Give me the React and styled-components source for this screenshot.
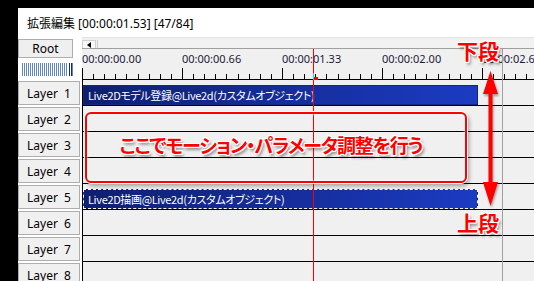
import React from 'react'
import styled, { createGlobalStyle } from 'styled-components'

const GlobalStyle = createGlobalStyle`
  html, body {
    margin: 0;
    padding: 0;
    background: #000;
  }
  body {
    font-family: "Noto Sans", "Noto Sans CJK JP", sans-serif;
  }
`;

// 全体（黒い余白の上にウィンドウ）
const Screen = styled.div`
  width: 534px;
  height: 281px;
  box-sizing: border-box;
  padding: 8px 0 0 18px;
  overflow: hidden;
  background: #000;
`;

const Window = styled.div`
  height: 100%;
  display: flex;
  flex-direction: column;
  background: #fff;
`;

const TitleBar = styled.div`
  height: 29px;
  flex-shrink: 0;
  display: flex;
  align-items: center;
  padding-left: 9px;
  font-size: 12px;
  color: #000;
`;

const Body = styled.div`
  flex: 1;
  display: flex;
  min-height: 0;
`;

// 左側のレイヤー列
const Side = styled.div`
  width: 64px;
  flex-shrink: 0;
  display: flex;
  flex-direction: column;
  background: #fff;
`;

const RootButton = styled.div`
  width: 55px;
  height: 19px;
  flex-shrink: 0;
  margin-top: 2px;
  box-sizing: border-box;
  border: 1px solid #adadad;
  background: #efefef;
  display: flex;
  align-items: center;
  justify-content: center;
  font-size: 12px;
  color: #000;
`;

const Meter = styled.div`
  width: 51px;
  height: 13px;
  flex-shrink: 0;
  margin: 5px 0 4px 4px;
  background:
    linear-gradient(90deg, transparent 0 46px, #ffffff 46px 47px, #1c2a6a 47px 48px, #fff 48px 49px, #1c2a6a 49px 50px, transparent 50px),
    repeating-linear-gradient(90deg, #5d86d8 0 1px, #ffffff 1px 2px);
`;

const LayerButton = styled.div`
  width: 62px;
  height: 24px;
  margin: 1px 0;
  box-sizing: border-box;
  border: 1px solid #adadad;
  background: #f0f0f0;
  display: flex;
  align-items: center;
  justify-content: center;
  font-size: 12px;
  color: #000;
  white-space: pre;
  flex-shrink: 0;
`;

// タイムライン部分
const Timeline = styled.div`
  flex: 1;
  position: relative;
  display: flex;
  flex-direction: column;
  background: #f0f0f0;
  overflow: hidden;
`;

const ScrollBar = styled.div`
  height: 12px;
  flex-shrink: 0;
  display: flex;
  box-sizing: border-box;
  padding-top: 2px;
  border-top: 1px solid #e3e3e3;
  border-bottom: 1px solid #a0a0a0;
  background: #f0f0f0;
`;

const ScrollArrow = styled.div`
  width: 14px;
  box-sizing: border-box;
  border: 1px solid #cfcfcf;
  border-bottom: none;
  background: #f8f8f8;
  display: flex;
  align-items: center;
  justify-content: center;
  &::before {
    content: '';
    border-style: solid;
    border-width: 3px 4px 3px 0;
    border-color: transparent #000 transparent transparent;
  }
`;

const ScrollThumb = styled.div`
  flex: 1;
  margin-left: 1px;
  box-sizing: border-box;
  border-left: 1px solid #cfcfcf;
  background: #f2f2f2;
`;

const Ruler = styled.div`
  height: 31px;
  flex-shrink: 0;
  display: flex;
  flex-direction: column;
  justify-content: space-between;
`;

const RulerLabels = styled.div`
  display: flex;
  padding-top: 3px;
`;

const RulerLabel = styled.div`
  width: 100px;
  flex-shrink: 0;
  font-size: 11px;
  line-height: 14px;
  color: #1a1a3a;
  white-space: nowrap;
`;

const Rows = styled.div`
  border-left: 1px solid #000;
`;

const Row = styled.div`
  height: 26px;
  flex-shrink: 0;
  box-sizing: border-box;
  border-bottom: 1px solid #000;
  display: flex;
  align-items: flex-end;
`;

const Clip = styled.div`
  position: relative;
  width: 395px;
  height: 20px;
  box-sizing: border-box;
  padding-left: 4px;
  display: flex;
  align-items: center;
  background: linear-gradient(90deg, #0f1f70, #1b3bc2);
  color: #fff;
  font-family: "Noto Sans CJK JP", sans-serif;
  font-size: 11px;
  font-feature-settings: "palt";
  letter-spacing: -0.35px;
  white-space: nowrap;
  border: ${p => (p.selected ? '1px dashed #fff' : '1px solid #14277e')};
  &::after {
    content: '';
    position: absolute;
    top: 0;
    bottom: 0;
    left: ${p => p.cursor}px;
    width: 1px;
    background: #18d060;
  }
`;

const TimeCursor = styled.div`
  position: absolute;
  left: 231px;
  top: 12px;
  bottom: 0;
  width: 1px;
  background: #ff0000;
`;

const CursorHead = styled.div`
  position: absolute;
  left: 231px;
  top: 36px;
  width: 1px;
  height: 7px;
  background: #00e0f0;
  &::after {
    content: '';
    position: absolute;
    left: 1px;
    top: 4px;
    width: 4px;
    height: 3px;
    background: #ff0000;
  }
`;

const SceneEnd = styled.div`
  position: absolute;
  left: 420px;
  top: 12px;
  bottom: 0;
  width: 1px;
  background: #a0a0a0;
`;

// 注釈
const NoteBox = styled.div`
  position: absolute;
  left: 3px;
  top: 75px;
  width: 382px;
  height: 71px;
  box-sizing: border-box;
  border: 2px solid #ff0000;
  border-radius: 6px;
  box-shadow: 0 0 0 1px #fff, 2px 3px 4px rgba(0, 0, 0, 0.35), inset 0 0 3px #fff;
  display: flex;
  align-items: center;
  justify-content: center;
  padding: 0 10px 7px 0;
`;

const outline = `
  -1px -1px 0 #fff, 1px -1px 0 #fff, -1px 1px 0 #fff, 1px 1px 0 #fff,
  0 -1px 0 #fff, 0 1px 0 #fff, -1px 0 0 #fff, 1px 0 0 #fff,
  2px 3px 3px rgba(0, 0, 0, 0.45)
`;

const NoteText = styled.div`
  color: #ff0000;
  font-family: "Noto Sans CJK JP", sans-serif;
  font-weight: 700;
  font-size: 19px;
  font-feature-settings: "palt";
  letter-spacing: -1.15px;
  white-space: nowrap;
  text-shadow: ${outline};
`;

const SideLabel = styled.div`
  position: absolute;
  left: 375px;
  top: ${p => p.top}px;
  color: #ff0000;
  font-family: "Noto Sans CJK JP", sans-serif;
  font-weight: 700;
  font-size: 21px;
  line-height: 24px;
  text-shadow: ${outline};
`;

const ArrowSvg = styled.svg`
  position: absolute;
  left: 399px;
  top: 32px;
  filter: drop-shadow(1px 2px 1px rgba(0, 0, 0, 0.35));
`;

function Ticks() {
  const lines = [];
  for (let i = 0; i <= 45; i++) {
    const x = Math.round(i * (100 / 9)) + 0.5;
    const major = i % 9 === 0;
    lines.push(<line key={i} x1={x} x2={x} y1={major ? 1 : 7} y2={13} stroke="#000" />);
  }
  return (
    <svg width="452" height="13" style={{ display: 'block' }}>
      {lines}
      <line x1="0" x2="452" y1="12.5" y2="12.5" stroke="#000" />
    </svg>
  );
}

const layers = [1, 2, 3, 4, 5, 6, 7, 8];
const clips = {
  1: { text: 'Live2Dモデル登録@Live2d(カスタムオブジェクト)' },
  5: { text: 'Live2D描画@Live2d(カスタムオブジェクト)', selected: true },
};
const times = ['00:00:00.00', '00:00:00.66', '00:00:01.33', '00:00:02.00', '00:00:02.66'];

export default function App() {
  return (
    <>
      <GlobalStyle />
      <Screen>
        <Window>
          <TitleBar>拡張編集 [00:00:01.53] [47/84]</TitleBar>
          <Body>
            <Side>
              <RootButton>Root</RootButton>
              <Meter />
              {layers.map(n => (
                <LayerButton key={n}>{`Layer  ${n}`}</LayerButton>
              ))}
            </Side>
            <Timeline>
              <ScrollBar>
                <ScrollArrow />
                <ScrollThumb />
              </ScrollBar>
              <Ruler>
                <RulerLabels>
                  {times.map(t => (
                    <RulerLabel key={t}>{t}</RulerLabel>
                  ))}
                </RulerLabels>
                <Ticks />
              </Ruler>
              <Rows>
                {layers.map(n => (
                  <Row key={n}>
                    {clips[n] && (
                      <Clip selected={clips[n].selected} cursor={229}>
                        {clips[n].text}
                      </Clip>
                    )}
                  </Row>
                ))}
              </Rows>
              <SceneEnd />
              <TimeCursor />
              <CursorHead />
              <NoteBox>
                <NoteText>ここでモーション・パラメータ調整を行う</NoteText>
              </NoteBox>
              <ArrowSvg width="20" height="140" viewBox="0 0 20 140">
                <path d="M9.5 2 L17 25 L11.5 25 L11.5 113 L17 113 L9.5 137 L2 113 L7.5 113 L7.5 25 L2 25 Z" fill="#ff0000" />
              </ArrowSvg>
              <SideLabel top={1}>下段</SideLabel>
              <SideLabel top={173}>上段</SideLabel>
            </Timeline>
          </Body>
        </Window>
      </Screen>
    </>
  )
}
